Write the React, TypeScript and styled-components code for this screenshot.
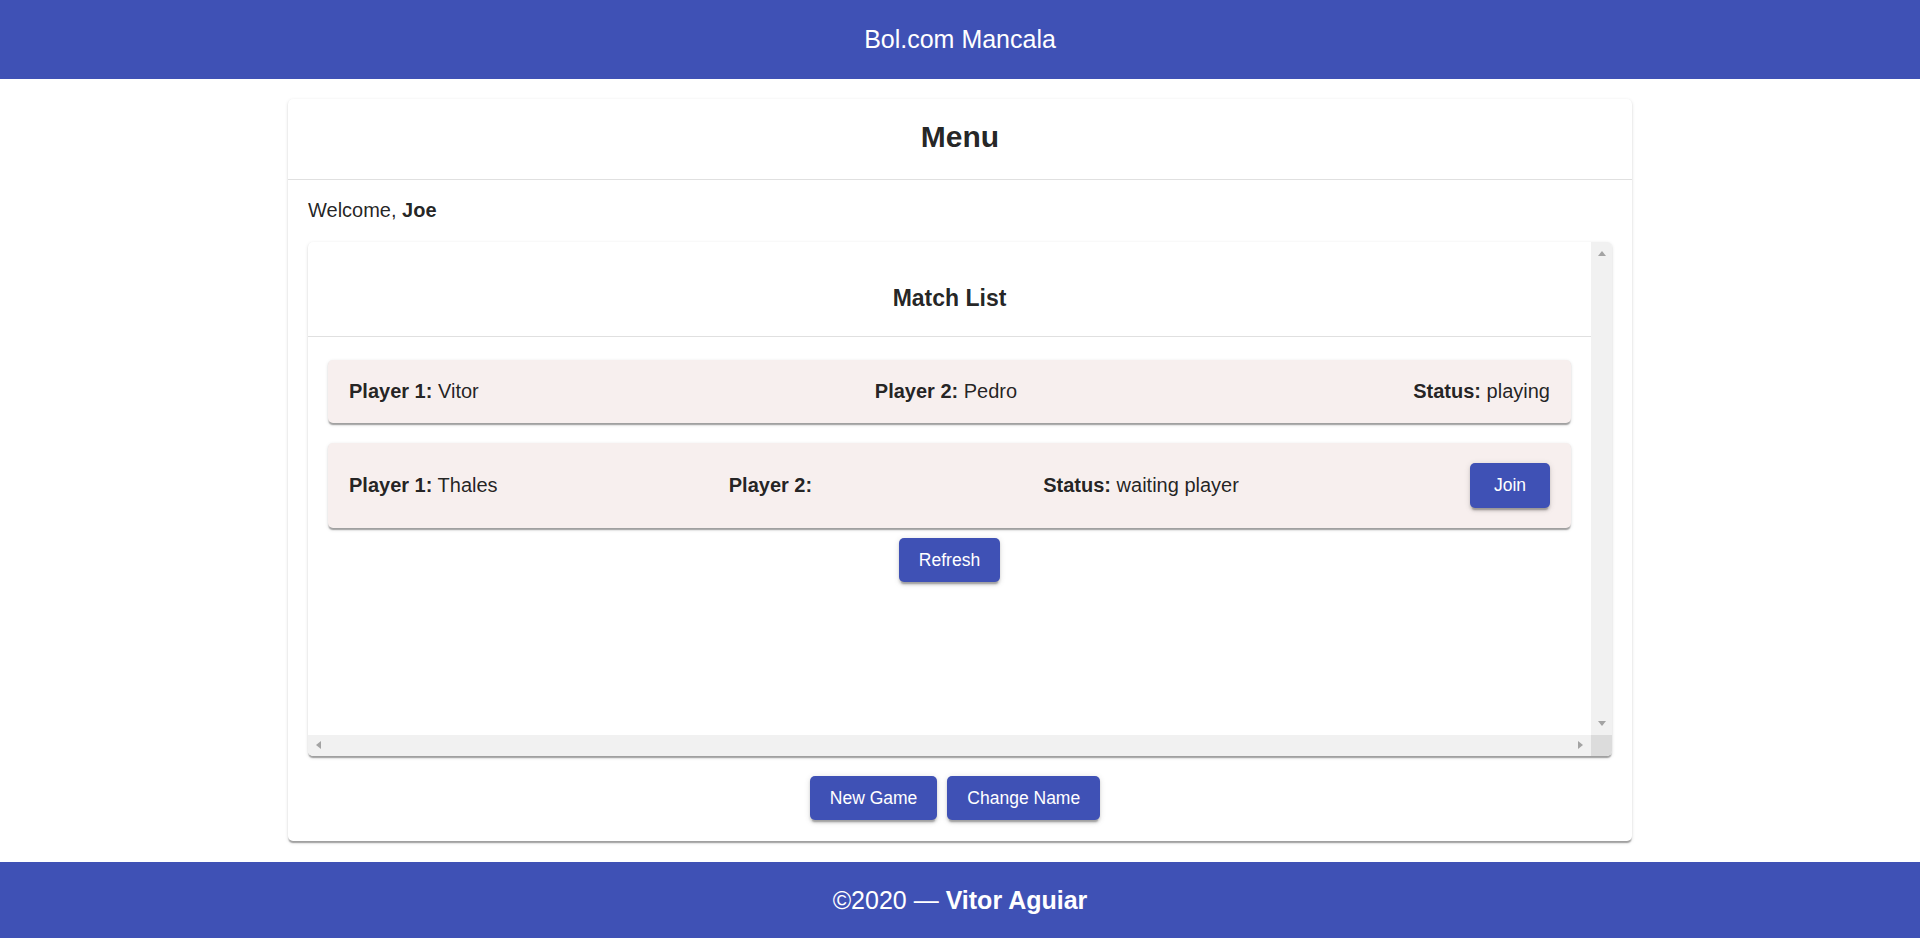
import React from "react";
import styled, { createGlobalStyle, css } from "styled-components";

const GlobalStyle = createGlobalStyle`
  html, body { margin: 0; padding: 0; }
  body {
    font-family: "Liberation Sans", Arial, sans-serif;
    color: rgba(0, 0, 0, 0.87);
    background: #ffffff;
  }
  * { box-sizing: border-box; }
`;

const Page = styled.div`
  display: flex;
  flex-direction: column;
  min-height: 938px;
  height: 100vh;
`;

const TopBar = styled.header`
  flex: 0 0 79px;
  height: 79px;
  background: #3f51b5;
  color: #ffffff;
  display: flex;
  align-items: center;
  justify-content: center;
  font-size: 25px;
`;

const Main = styled.main`
  flex: 1;
  min-height: 0;
  display: flex;
  flex-direction: column;
  padding: 20px 0 21px;
`;

const elevation1 = css`
  box-shadow: 0 2.5px 1.25px -1.25px rgba(0, 0, 0, 0.2),
    0 1.25px 1.25px 0 rgba(0, 0, 0, 0.14),
    0 1.25px 3.75px 0 rgba(0, 0, 0, 0.12);
`;

const Card = styled.section`
  width: 70%;
  margin: 0 auto;
  flex: 1;
  min-height: 0;
  display: flex;
  flex-direction: column;
  background: #ffffff;
  border-radius: 5px;
  ${elevation1}
`;

const CardHeader = styled.div`
  padding: 21px 16px 25px;
  border-bottom: 1px solid #e0e0e0;
  text-align: center;
`;

const Title = styled.h1`
  margin: 0;
  font-size: 30px;
  font-weight: 700;
  line-height: normal;
`;

const CardBody = styled.div`
  flex: 1;
  min-height: 0;
  display: flex;
  flex-direction: column;
  padding: 19px 20px 21px;
`;

const Welcome = styled.p`
  margin: 0;
  font-size: 20px;
  line-height: normal;
  b { font-weight: 700; }
`;

/* Scrollable panel drawn with classic scrollbars */
const ScrollFrame = styled.div`
  flex: 1;
  min-height: 0;
  margin-top: 20px;
  display: grid;
  grid-template-columns: 1fr 21px;
  grid-template-rows: 1fr 21px;
  background: #ffffff;
  border-radius: 5px;
  overflow: hidden;
  ${elevation1}
`;

const Viewport = styled.div`
  min-height: 0;
  min-width: 0;
  overflow: hidden;
`;

const VTrack = styled.div`
  background: #f1f1f1;
  display: flex;
  flex-direction: column;
  justify-content: space-between;
`;

const HTrack = styled.div`
  background: #f1f1f1;
  display: flex;
  justify-content: space-between;
`;

const Corner = styled.div`
  background: #dcdcdc;
`;

type Dir = "up" | "down" | "left" | "right";

const ArrowBox = styled.div<{ $dir: Dir }>`
  width: 21px;
  height: 21px;
  flex: 0 0 21px;
  display: flex;
  ${(p) =>
    p.$dir === "up"
      ? css`justify-content: center; align-items: flex-start; padding-top: 9px;`
      : p.$dir === "down"
      ? css`justify-content: center; align-items: flex-start; padding-top: 7px;`
      : css`align-items: center; justify-content: flex-start; padding-left: 8px;`}
`;

const Triangle = styled.span<{ $dir: Dir }>`
  width: 0;
  height: 0;
  border-style: solid;
  ${(p) =>
    p.$dir === "up"
      ? css`border-width: 0 4px 5px 4px; border-color: transparent transparent #a3a3a3 transparent;`
      : p.$dir === "down"
      ? css`border-width: 5px 4px 0 4px; border-color: #a3a3a3 transparent transparent transparent;`
      : p.$dir === "left"
      ? css`border-width: 4.5px 5px 4.5px 0; border-color: transparent #a3a3a3 transparent transparent;`
      : css`border-width: 4.5px 0 4.5px 5px; border-color: transparent transparent transparent #a3a3a3;`}
`;

function Arrow({ dir }: { dir: Dir }) {
  return (
    <ArrowBox $dir={dir}>
      <Triangle $dir={dir} />
    </ArrowBox>
  );
}

const ListHeader = styled.div`
  padding: 43px 16px 24px;
  border-bottom: 1px solid #e0e0e0;
  text-align: center;
`;

const ListTitle = styled.h2`
  margin: 0;
  font-size: 23px;
  font-weight: 700;
  line-height: normal;
`;

const List = styled.div`
  padding: 23px 20px 10px;
  display: flex;
  flex-direction: column;
  align-items: stretch;
`;

const MatchRow = styled.div<{ $last?: boolean }>`
  display: flex;
  align-items: center;
  justify-content: space-between;
  padding: 20px 21px;
  margin-bottom: ${(p) => (p.$last ? "10px" : "20px")};
  background: #f7efee;
  border-radius: 5px;
  font-size: 20px;
  line-height: normal;
  ${elevation1}
`;

const Field = styled.span`
  white-space: nowrap;
  b { font-weight: 700; }
`;

const Button = styled.button`
  font-family: "Liberation Sans", Arial, sans-serif;
  font-size: 17.5px;
  line-height: 30.5px;
  letter-spacing: 0;
  color: #ffffff;
  background: #3f51b5;
  border: 0;
  border-radius: 5px;
  padding: 7px 20px;
  min-width: 80px;
  cursor: pointer;
  box-shadow: 0 3.75px 1.25px -2.5px rgba(0, 0, 0, 0.2),
    0 2.5px 2.5px 0 rgba(0, 0, 0, 0.14),
    0 1.25px 6.25px 0 rgba(0, 0, 0, 0.12);
`;

const Centered = styled.div`
  display: flex;
  justify-content: center;
`;

const Actions = styled.div`
  margin-top: 20px;
  display: flex;
  justify-content: center;

  & > ${Button} {
    margin-right: 10px;
  }
`;

const Footer = styled.footer`
  flex: 0 0 76px;
  height: 76px;
  background: #3f51b5;
  color: #ffffff;
  display: flex;
  align-items: center;
  justify-content: center;
  font-size: 25px;
  b { font-weight: 700; }
`;

type Match = { p1: string; p2: string; status: string; joinable: boolean };

const matches: Match[] = [
  { p1: "Vitor", p2: "Pedro", status: "playing", joinable: false },
  { p1: "Thales", p2: "", status: "waiting player", joinable: true },
];

export default function App() {
  return (
    <>
      <GlobalStyle />
      <Page>
        <TopBar>Bol.com Mancala</TopBar>
        <Main>
          <Card>
            <CardHeader>
              <Title>Menu</Title>
            </CardHeader>
            <CardBody>
              <Welcome>
                Welcome, <b>Joe</b>
              </Welcome>
              <ScrollFrame>
                <Viewport>
                  <ListHeader>
                    <ListTitle>Match List</ListTitle>
                  </ListHeader>
                  <List>
                    {matches.map((m, i) => (
                      <MatchRow key={i} $last={i === matches.length - 1}>
                        <Field>
                          <b>Player 1:</b> {m.p1}
                        </Field>
                        <Field>
                          <b>Player 2:</b> {m.p2}
                        </Field>
                        <Field>
                          <b>Status:</b> {m.status}
                        </Field>
                        {m.joinable && <Button>Join</Button>}
                      </MatchRow>
                    ))}
                    <Centered>
                      <Button>Refresh</Button>
                    </Centered>
                  </List>
                </Viewport>
                <VTrack>
                  <Arrow dir="up" />
                  <Arrow dir="down" />
                </VTrack>
                <HTrack>
                  <Arrow dir="left" />
                  <Arrow dir="right" />
                </HTrack>
                <Corner />
              </ScrollFrame>
              <Actions>
                <Button>New Game</Button>
                <Button>Change Name</Button>
              </Actions>
            </CardBody>
          </Card>
        </Main>
        <Footer>
          <span>
            ©2020 — <b>Vitor Aguiar</b>
          </span>
        </Footer>
      </Page>
    </>
  );
}
